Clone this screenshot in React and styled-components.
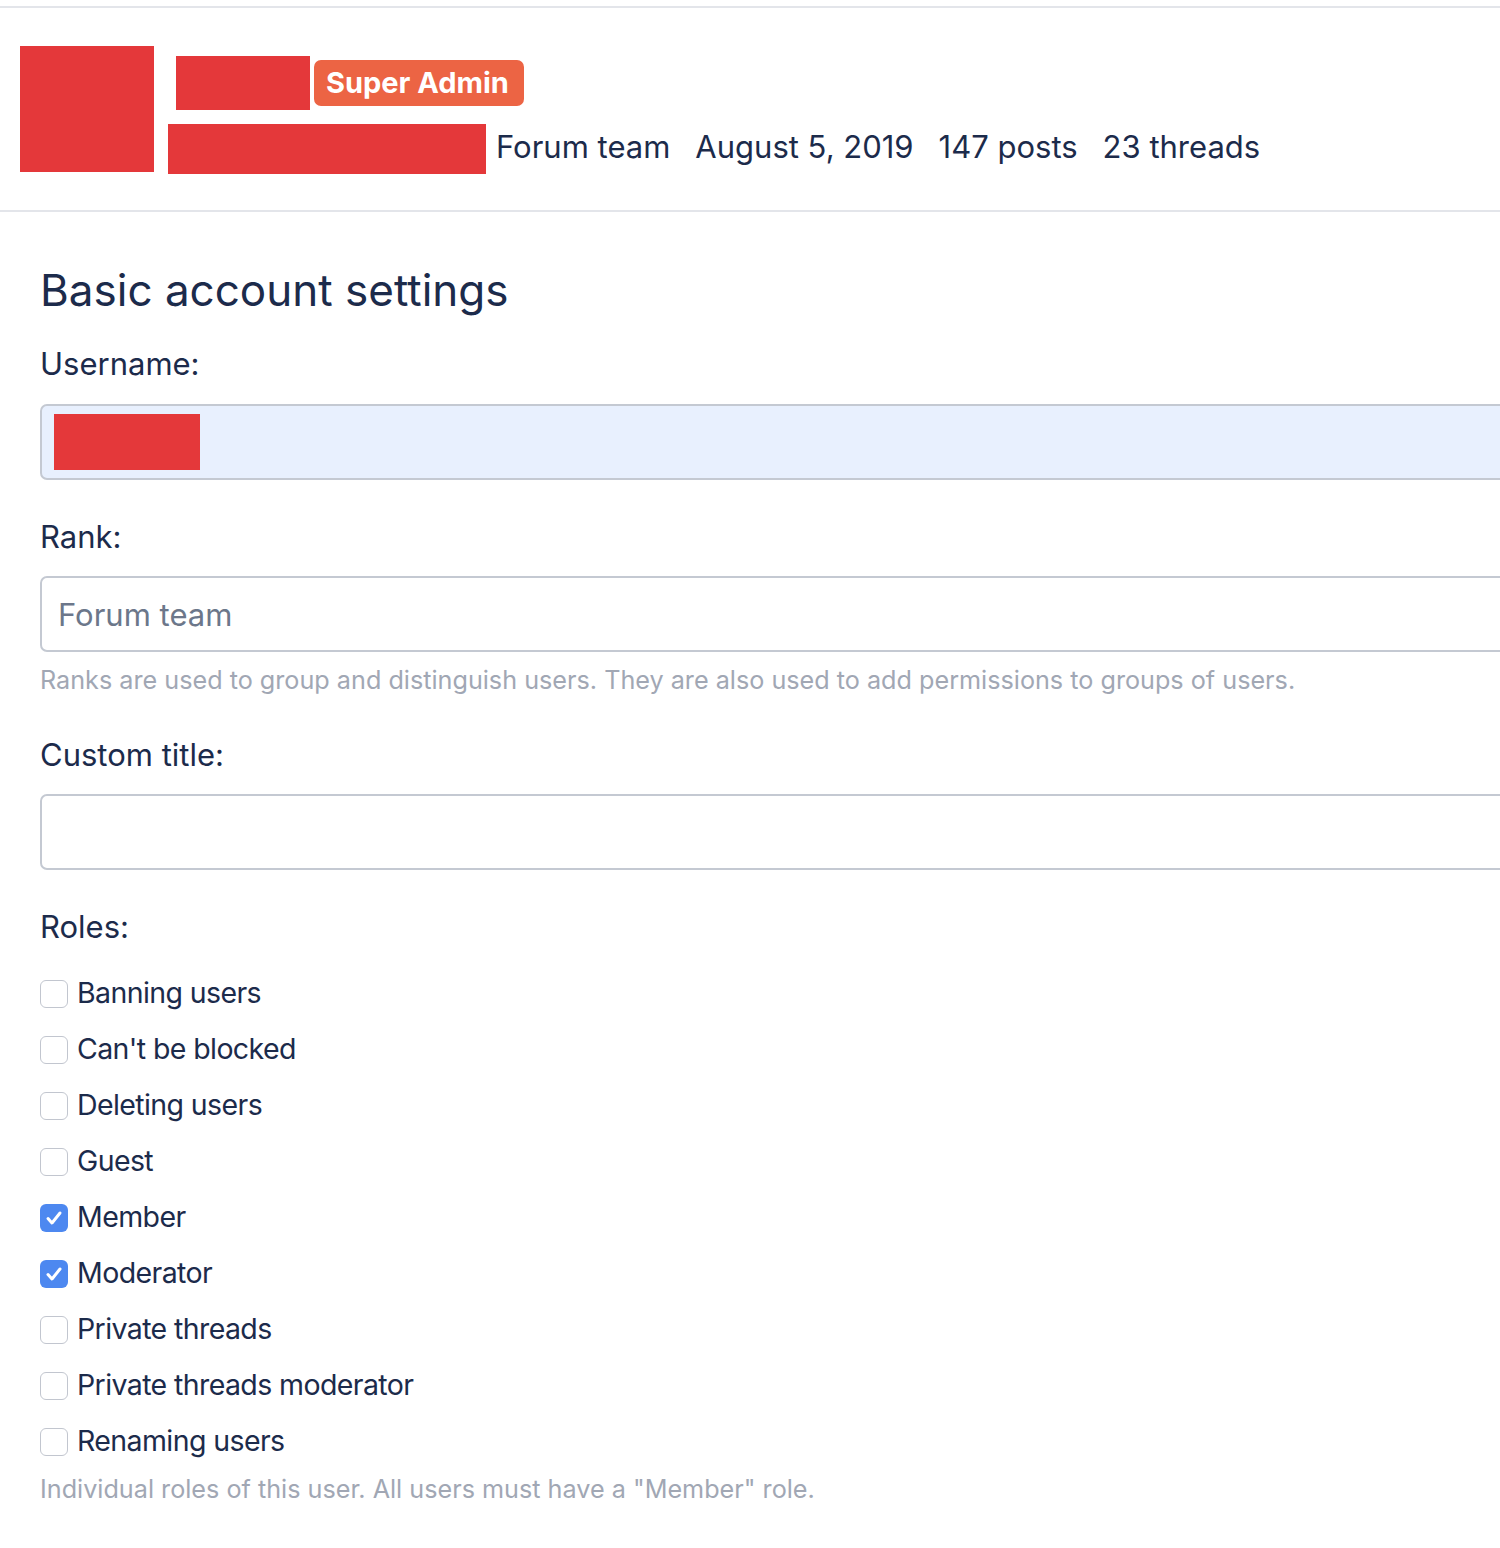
import React from 'react'
import styled, { createGlobalStyle } from 'styled-components'

const GlobalStyle = createGlobalStyle`
  html, body {
    margin: 0;
    padding: 0;
    background: #fff;
    overflow: hidden;
  }
  body {
    font-family: Inter, "Noto Sans", "Liberation Sans", sans-serif;
    color: #1c2b4b;
  }
`

const Page = styled.div`
  width: 1500px;
  overflow: hidden;
  padding-top: 6px;
`

const ProfileHeader = styled.header`
  display: flex;
  align-items: flex-start;
  height: 206px;
  border-top: 2px solid #e3e5ea;
  border-bottom: 2px solid #e3e5ea;
  box-sizing: border-box;
  padding: 38px 0 0 20px;
`

const Redacted = styled.div`
  background: #e4383a;
  width: ${p => p.w}px;
  height: ${p => p.h}px;
  flex-shrink: 0;
`

const UserInfo = styled.div`
  display: flex;
  flex-direction: column;
  margin-left: 14px;
`

const NameRow = styled.div`
  display: flex;
  align-items: center;
  margin-top: 10px;
  padding-left: 8px;
`

const Badge = styled.span`
  margin-left: 4px;
  background: #ec6444;
  color: #fff;
  font-weight: 700;
  font-size: 29px;
  line-height: 46px;
  height: 46px;
  padding: 0 15px 0 12px;
  border-radius: 7px;
`

const MetaRow = styled.div`
  display: flex;
  align-items: flex-start;
  margin-top: 14px;
`

const Meta = styled.span`
  font-size: 31px;
  line-height: 46px;
  margin-left: ${p => (p.first ? 10 : 25)}px;
  color: #1c2b4b;
  white-space: nowrap;
`

const Form = styled.section`
  padding: 50px 0 0 40px;
`

const Heading = styled.h2`
  margin: 0 0 26px;
  font-size: 44px;
  line-height: 56px;
  font-weight: 400;
  color: #1c2b4b;
`

const Field = styled.div`
  margin-bottom: 37px;
`

const Label = styled.div`
  font-size: 31px;
  line-height: 40px;
  margin-bottom: ${p => (p.tight ? 19 : 20)}px;
  color: #1c2b4b;
`

const Input = styled.div`
  width: 1520px;
  height: 76px;
  box-sizing: border-box;
  border: 2px solid #c4c9d2;
  border-radius: 7px;
  background: ${p => (p.filled ? '#e8f0fe' : '#fff')};
  display: flex;
  align-items: center;
  padding-left: 12px;
  font-size: 31px;
  color: #6c778a;
`

const InputText = styled.span`
  padding-left: 4px;
`

const Help = styled.div`
  margin-top: ${p => (p.close ? 1 : 10)}px;
  font-size: 25.2px;
  line-height: 36px;
  color: #a1a7b4;
`

const RoleList = styled.div`
  display: flex;
  flex-direction: column;
`

const RoleRow = styled.label`
  display: flex;
  align-items: center;
  height: 56px;
  font-size: 28.5px;
  letter-spacing: -0.6px;
  color: #1c2b4b;
`

const RoleName = styled.span`
  margin-top: -3px;
`

const Box = styled.span`
  width: 28px;
  height: 28px;
  box-sizing: border-box;
  border-radius: 6px;
  border: ${p => (p.checked ? 'none' : '1.5px solid #c2c6cf')};
  background: ${p => (p.checked ? '#4d88f0' : '#fff')};
  display: flex;
  align-items: center;
  justify-content: center;
  margin-right: 9px;
  flex-shrink: 0;
`

const Check = () => (
  <svg width='20' height='20' viewBox='0 0 20 20' fill='none'>
    <path d='M4 10.5l4 4.5L16 5' stroke='#fff' strokeWidth='3' strokeLinecap='round' strokeLinejoin='round' />
  </svg>
)

const roles = [
  { name: 'Banning users' },
  { name: "Can't be blocked" },
  { name: 'Deleting users' },
  { name: 'Guest' },
  { name: 'Member', checked: true },
  { name: 'Moderator', checked: true },
  { name: 'Private threads' },
  { name: 'Private threads moderator' },
  { name: 'Renaming users' }
]

const App = () => {
  return (
    <Page>
      <GlobalStyle />
      <ProfileHeader>
        <Redacted w={134} h={126} />
        <UserInfo>
          <NameRow>
            <Redacted w={134} h={54} />
            <Badge>Super Admin</Badge>
          </NameRow>
          <MetaRow>
            <Redacted w={318} h={50} />
            <Meta first>Forum team</Meta>
            <Meta>August 5, 2019</Meta>
            <Meta>147 posts</Meta>
            <Meta>23 threads</Meta>
          </MetaRow>
        </UserInfo>
      </ProfileHeader>

      <Form>
        <Heading>Basic account settings</Heading>

        <Field>
          <Label>Username:</Label>
          <Input filled>
            <Redacted w={146} h={56} />
          </Input>
        </Field>

        <Field>
          <Label tight>Rank:</Label>
          <Input>
            <InputText>Forum team</InputText>
          </Input>
          <Help>Ranks are used to group and distinguish users. They are also used to add permissions to groups of users.</Help>
        </Field>

        <Field>
          <Label tight>Custom title:</Label>
          <Input />
        </Field>

        <div>
          <Label tight>Roles:</Label>
          <RoleList>
            {roles.map(r => (
              <RoleRow key={r.name}>
                <Box checked={r.checked}>{r.checked && <Check />}</Box>
                <RoleName>{r.name}</RoleName>
              </RoleRow>
            ))}
          </RoleList>
          <Help close>Individual roles of this user. All users must have a "Member" role.</Help>
        </div>
      </Form>
    </Page>
  )
}

export default App
